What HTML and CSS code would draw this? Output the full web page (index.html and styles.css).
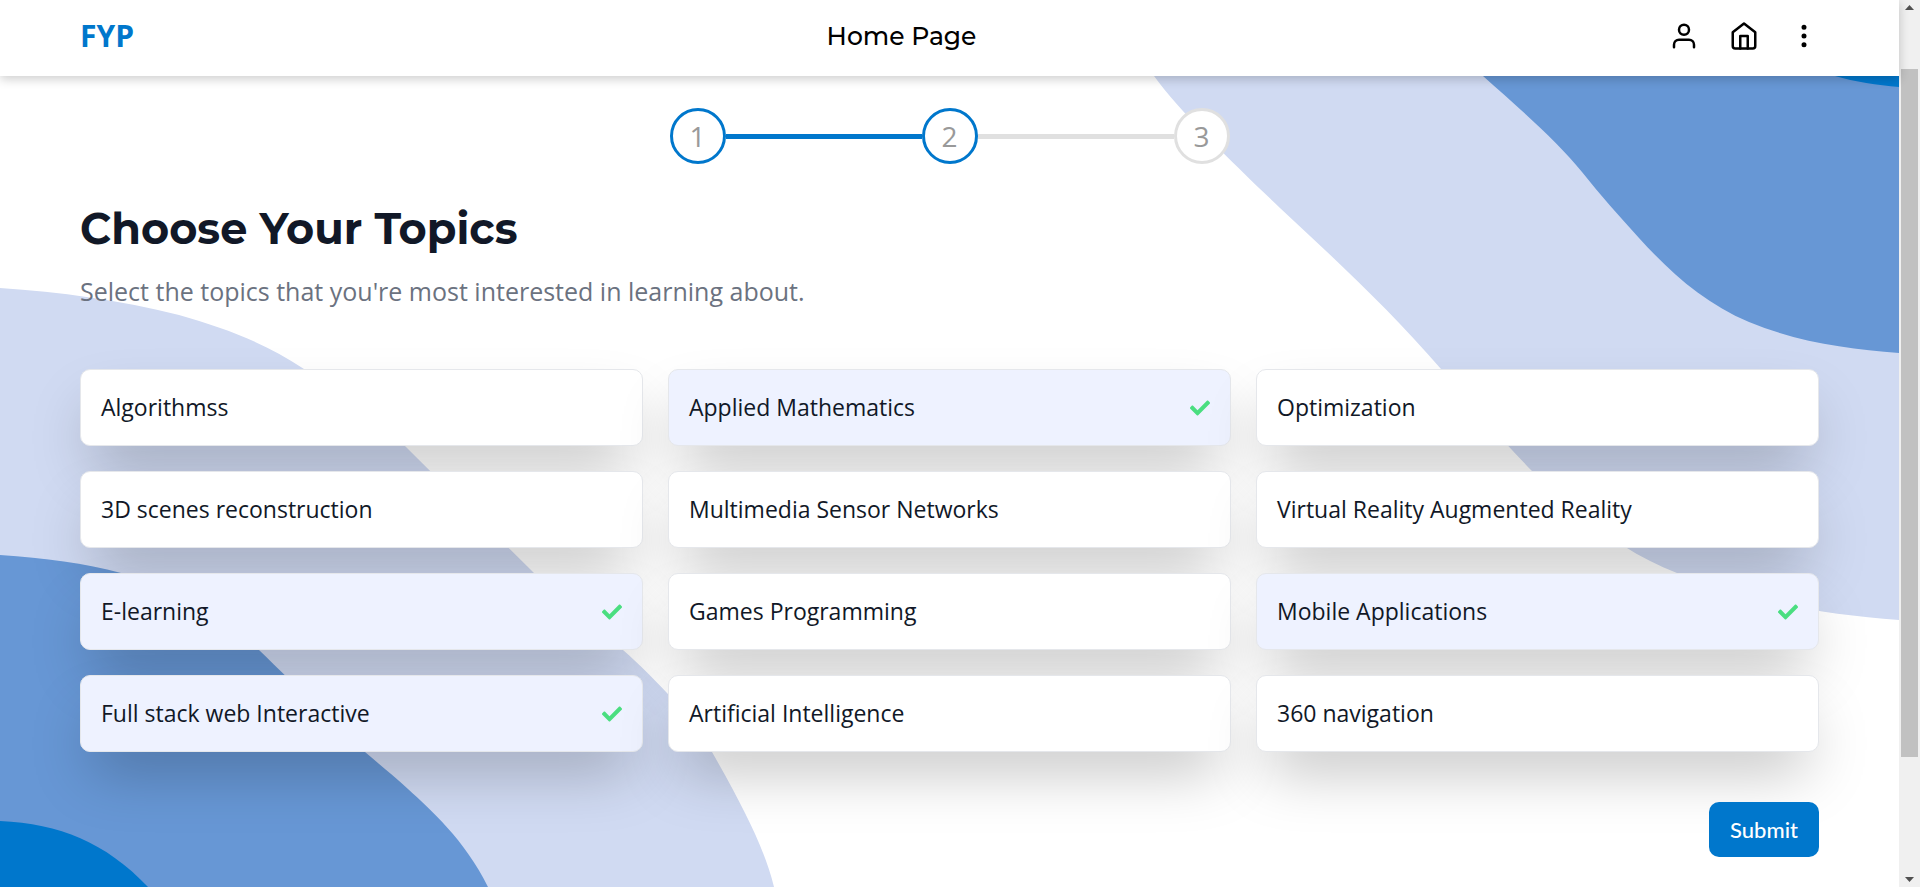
FILE: index.html
```html
<!DOCTYPE html>
<html lang="en">
<head>
<meta charset="utf-8">
<meta name="viewport" content="width=device-width, initial-scale=1">
<title>Home Page</title>
<link rel="stylesheet" href="styles.css">
</head>
<body>
<svg class="sprite" aria-hidden="true">
  <symbol id="check" viewBox="0 0 512 512"><path d="M173.898 439.404l-166.4-166.4c-9.997-9.997-9.997-26.206 0-36.204l36.203-36.204c9.997-9.998 26.207-9.998 36.204 0L192 312.69 432.095 72.596c9.997-9.997 26.207-9.997 36.204 0l36.203 36.204c9.997 9.997 9.997 26.206 0 36.204l-294.4 294.401c-9.998 9.997-26.207 9.997-36.204-.001z"/></symbol>
</svg>
<div class="page">
  <header class="header">
    <a class="brand" href="#">FYP</a>
    <p class="header-title">Home Page</p>
    <nav class="actions" aria-label="Main">
      <button class="icon-button" type="button" aria-label="Profile">
        <svg class="icon" viewBox="0 0 24 24"><path d="M20 21v-2a4 4 0 0 0-4-4H8a4 4 0 0 0-4 4v2"/><circle cx="12" cy="7" r="4"/></svg>
      </button>
      <a class="icon-button" href="#" aria-label="Home">
        <svg class="icon" viewBox="0 0 24 24"><path d="M3 9l9-7 9 7v11a2 2 0 0 1-2 2H5a2 2 0 0 1-2-2z"/><path d="M9 22V12h6v10"/></svg>
      </a>
      <button class="icon-button" type="button" aria-label="More">
        <svg class="icon" viewBox="0 0 24 24"><circle cx="12" cy="12" r="1"/><circle cx="12" cy="5" r="1"/><circle cx="12" cy="19" r="1"/></svg>
      </button>
    </nav>
  </header>
  <main class="main">
    <svg class="waves" viewBox="0 76 1899 811" preserveAspectRatio="none" aria-hidden="true">
      <path class="wave-light" d="M1154 76C1180 112 1238 168 1280 208C1335 259 1390 310 1441 369C1475 409 1500 438 1532 471C1580 518 1625 553 1677 573C1745 601 1820 614 1899 620V76Z"/>
      <path class="wave-mid" d="M1483 76C1520 109 1558 142 1582 172C1600 195 1620 217 1639 238C1671 273 1704 303 1749 322C1800 343 1850 349 1899 353V76Z"/>
      <path class="wave-dark" d="M1835 76C1855 82 1877 85 1899 87V76Z"/>
      <path class="wave-light" d="M0 288C60 292 120 300 179 315C225 328 265 343 304 369C340 392 375 418 405 446C440 481 485 524 534 573C570 605 600 627 623 650C640 665 655 680 667 693C683 710 700 733 712 752C745 810 765 850 774 887H0Z"/>
      <path class="wave-mid" d="M0 555C45 558 85 563 121 573C175 588 215 613 259 650C298 688 337 725 365 752C380 765 394 776 408 789C430 809 465 840 488 887H0Z"/>
      <path class="wave-dark" d="M0 821C60 824 105 842 148 887H0Z"/>
    </svg>
    <ol class="steps">
      <li class="step step-done">1</li>
      <li class="step-line step-line-done" aria-hidden="true"></li>
      <li class="step step-done" aria-current="step">2</li>
      <li class="step-line" aria-hidden="true"></li>
      <li class="step">3</li>
    </ol>
    <h1 class="title">Choose Your Topics</h1>
    <p class="subtitle">Select the topics that you're most interested in learning about.</p>
    <form class="form">
      <div class="topics">
        <label class="topic"><input class="topic-input" type="checkbox">Algorithmss<svg class="check"><use href="#check"/></svg></label>
        <label class="topic"><input class="topic-input" type="checkbox" checked>Applied Mathematics<svg class="check"><use href="#check"/></svg></label>
        <label class="topic"><input class="topic-input" type="checkbox">Optimization<svg class="check"><use href="#check"/></svg></label>
        <label class="topic"><input class="topic-input" type="checkbox">3D scenes reconstruction<svg class="check"><use href="#check"/></svg></label>
        <label class="topic"><input class="topic-input" type="checkbox">Multimedia Sensor Networks<svg class="check"><use href="#check"/></svg></label>
        <label class="topic"><input class="topic-input" type="checkbox">Virtual Reality Augmented Reality<svg class="check"><use href="#check"/></svg></label>
        <label class="topic"><input class="topic-input" type="checkbox" checked>E-learning<svg class="check"><use href="#check"/></svg></label>
        <label class="topic"><input class="topic-input" type="checkbox">Games Programming<svg class="check"><use href="#check"/></svg></label>
        <label class="topic"><input class="topic-input" type="checkbox" checked>Mobile Applications<svg class="check"><use href="#check"/></svg></label>
        <label class="topic"><input class="topic-input" type="checkbox" checked>Full stack web Interactive<svg class="check"><use href="#check"/></svg></label>
        <label class="topic"><input class="topic-input" type="checkbox">Artificial Intelligence<svg class="check"><use href="#check"/></svg></label>
        <label class="topic"><input class="topic-input" type="checkbox">360 navigation<svg class="check"><use href="#check"/></svg></label>
      </div>
      <button class="submit" type="submit">Submit</button>
    </form>
  </main>
</div>
<div class="scrollbar" aria-hidden="true">
  <svg class="scroll-arrow" viewBox="0 0 9 5"><path d="M4.500 0L9 5H0Z"/></svg>
  <div class="scroll-track"><div class="scroll-thumb"></div></div>
  <svg class="scroll-arrow" viewBox="0 0 9 5"><path d="M0 0H9L4.500 5Z"/></svg>
</div>
</body>
</html>
```
FILE: styles.css
```css
* {
  box-sizing: border-box;
}

body {
  display: flex;
  min-height: 100vh;
  margin: 0;
  background: #fff;
  color: #111827;
  font-family: "Open Sans", "Noto Sans", sans-serif;
}

.sprite {
  position: absolute;
  width: 0;
  height: 0;
}

.page {
  display: flex;
  flex: 1;
  flex-direction: column;
  min-width: 0;
}

.header {
  position: relative;
  z-index: 2;
  display: flex;
  align-items: center;
  justify-content: space-between;
  padding: 18px 80px 22px;
  background: #fff;
  box-shadow: 0 3px 10px rgba(0, 0, 0, 0.2);
}

.brand {
  color: #07c;
  font-size: 30px;
  font-weight: 700;
  line-height: 36px;
  text-decoration: none;
}

.header-title {
  margin: 0;
  color: #000;
  font-family: Montserrat, Inter, sans-serif;
  font-size: 25px;
  font-weight: 500;
  line-height: 32px;
}

.actions {
  display: flex;
  gap: 30px;
}

.icon-button {
  display: block;
  padding: 0;
  border: 0;
  background: none;
  color: #000;
}

.icon {
  display: block;
  width: 30px;
  height: 30px;
  fill: none;
  stroke: currentColor;
  stroke-width: 2;
  stroke-linecap: round;
  stroke-linejoin: round;
}

.main {
  position: relative;
  z-index: 1;
  display: flex;
  flex: 1;
  flex-direction: column;
  padding: 32px 80px 30px;
  overflow: hidden;
}

.waves {
  position: absolute;
  inset: 0;
  z-index: -1;
  width: 100%;
  height: 100%;
}

.wave-light {
  fill: #d0daf2;
}

.wave-mid {
  fill: #6797d5;
}

.wave-dark {
  fill: #07c;
}

.steps {
  display: flex;
  align-items: center;
  width: 100%;
  max-width: 560px;
  margin: 0 auto;
  padding: 0;
  list-style: none;
}

.step {
  display: grid;
  place-items: center;
  width: 56px;
  height: 56px;
  border: 3px solid #e0e0e0;
  border-radius: 50%;
  background: #fff;
  color: #999;
  font-size: 28px;
  line-height: 50px;
}

.step-done {
  border-color: #07c;
}

.step-line {
  flex: 1;
  height: 5px;
  background: #e0e0e0;
}

.step-line-done {
  background: #07c;
}

.title {
  margin: 40px 0 0;
  font-family: Montserrat, Inter, sans-serif;
  font-size: 43px;
  font-weight: 700;
  line-height: 50px;
}

.subtitle {
  margin: 19px 0 0;
  color: #6b7280;
  font-size: 25px;
  line-height: 36px;
}

.form {
  display: flex;
  flex-direction: column;
  margin-top: 60px;
}

.topics {
  display: grid;
  grid-template-columns: repeat(3, minmax(0, 1fr));
  gap: 25px;
}

.topic {
  display: flex;
  align-items: center;
  justify-content: space-between;
  padding: 20px;
  border: 1px solid #e5e7eb;
  border-radius: 10px;
  background: #fff;
  box-shadow: 0 30px 60px -12px rgba(0, 0, 0, 0.25);
  font-size: 23px;
  line-height: 35px;
  cursor: pointer;
}

.topic-input {
  position: absolute;
  width: 1px;
  height: 1px;
  margin: 0;
  opacity: 0;
}

.topic:has(:checked) {
  background: #eef2ff;
}

.check {
  display: none;
  width: 20px;
  height: 20px;
  fill: #4ade80;
}

.topic-input:checked ~ .check {
  display: block;
}

.submit {
  align-self: flex-end;
  margin-top: 50px;
  padding: 10px 21px;
  border: 0;
  border-radius: 10px;
  background: #07c;
  color: #fff;
  font-family: Lato, sans-serif;
  font-size: 22px;
  font-weight: 500;
  line-height: 35px;
}

.scrollbar {
  display: flex;
  flex-direction: column;
  align-items: center;
  width: 21px;
  padding: 5px 2px;
  background: #f0f0f0;
}

.scroll-arrow {
  width: 9px;
  height: 5px;
  fill: #505050;
}

.scroll-track {
  flex: 1;
  align-self: stretch;
  padding: 59px 0 120px;
}

.scroll-thumb {
  height: 100%;
  background: #c1c1c1;
}
```
